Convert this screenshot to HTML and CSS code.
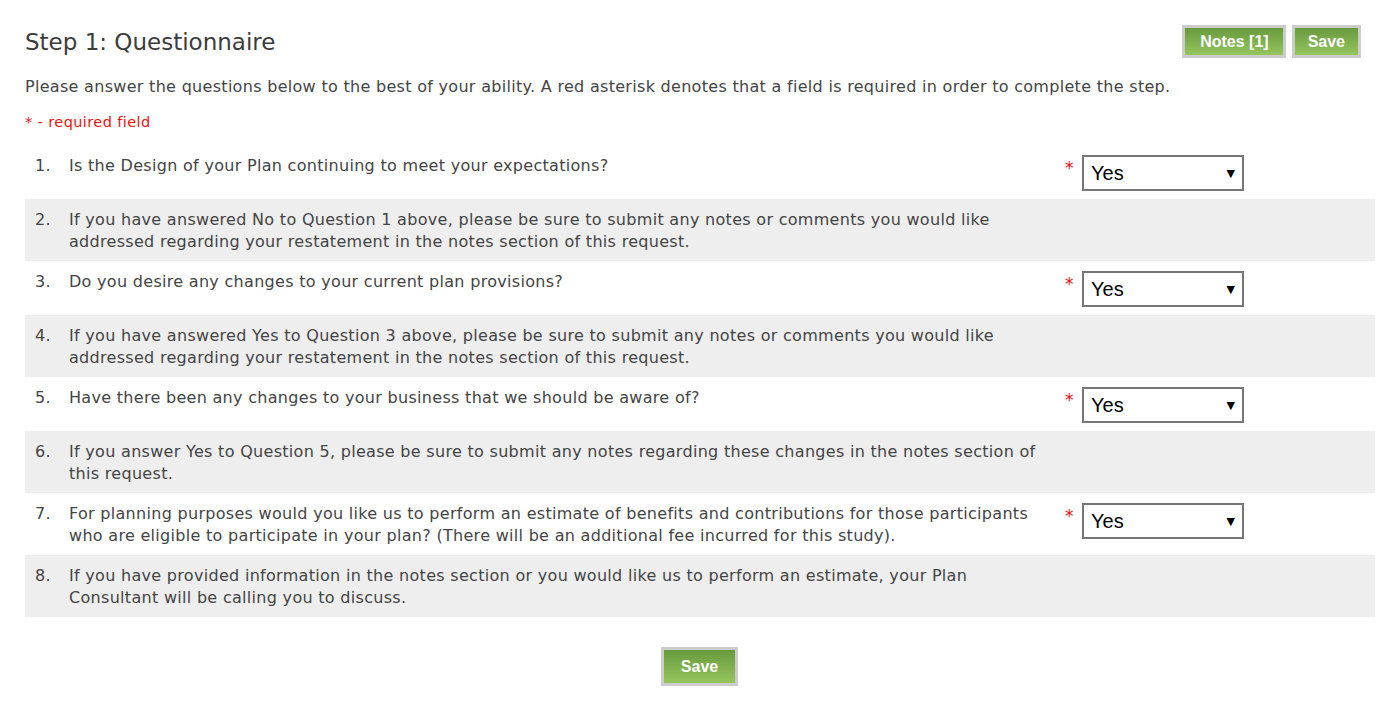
FILE: index.html
```html
<!DOCTYPE html>
<html>
<head>
<meta charset="utf-8">
<link rel="stylesheet" href="styles.css">
</head>
<body>
<div class="page">
  <div class="header">
    <h1 class="title">Step 1: Questionnaire</h1>
    <div class="actions">
      <button class="btn btn-notes">Notes [1]</button>
      <button class="btn">Save</button>
    </div>
  </div>
  <p class="intro">Please answer the questions below to the best of your ability. A red asterisk denotes that a field is required in order to complete the step.</p>
  <p class="req">* - required field</p>
  <div class="questions">
    <div class="row">
      <div class="num">1.</div>
      <div class="text">Is the Design of your Plan continuing to meet your expectations?</div>
      <div class="ans"><span class="star">*</span><div class="select"><span>Yes</span><span class="arrow">&#9660;</span></div></div>
    </div>
    <div class="row alt">
      <div class="num">2.</div>
      <div class="text">If you have answered No to Question 1 above, please be sure to submit any notes or comments you would like addressed regarding your restatement in the notes section of this request.</div>
      <div class="ans"></div>
    </div>
    <div class="row">
      <div class="num">3.</div>
      <div class="text">Do you desire any changes to your current plan provisions?</div>
      <div class="ans"><span class="star">*</span><div class="select"><span>Yes</span><span class="arrow">&#9660;</span></div></div>
    </div>
    <div class="row alt">
      <div class="num">4.</div>
      <div class="text">If you have answered Yes to Question 3 above, please be sure to submit any notes or comments you would like addressed regarding your restatement in the notes section of this request.</div>
      <div class="ans"></div>
    </div>
    <div class="row">
      <div class="num">5.</div>
      <div class="text">Have there been any changes to your business that we should be aware of?</div>
      <div class="ans"><span class="star">*</span><div class="select"><span>Yes</span><span class="arrow">&#9660;</span></div></div>
    </div>
    <div class="row alt">
      <div class="num">6.</div>
      <div class="text">If you answer Yes to Question 5, please be sure to submit any notes regarding these changes in the notes section of this request.</div>
      <div class="ans"></div>
    </div>
    <div class="row">
      <div class="num">7.</div>
      <div class="text">For planning purposes would you like us to perform an estimate of benefits and contributions for those participants who are eligible to participate in your plan? (There will be an additional fee incurred for this study).</div>
      <div class="ans"><span class="star">*</span><div class="select"><span>Yes</span><span class="arrow">&#9660;</span></div></div>
    </div>
    <div class="row alt">
      <div class="num">8.</div>
      <div class="text">If you have provided information in the notes section or you would like us to perform an estimate, your Plan Consultant will be calling you to discuss.</div>
      <div class="ans"></div>
    </div>
  </div>
  <div class="footer">
    <button class="btn btn-lg">Save</button>
  </div>
</div>
</body>
</html>
```
FILE: styles.css
```css
html, body {
  margin: 0;
  padding: 0;
  background: #ffffff;
}
body {
  font-family: "DejaVu Sans", Verdana, sans-serif;
  color: #444444;
  font-size: 16px;
  letter-spacing: 0.3px;
}
.page {
  padding: 25px 25px 0 25px;
}
.header {
  display: flex;
  justify-content: space-between;
  align-items: flex-start;
  padding-right: 14px;
}
.title {
  margin: 4px 0 0 0;
  font-size: 23px;
  font-weight: normal;
  color: #3c3c3c;
  line-height: 26px;
  letter-spacing: 0;
}
.actions {
  display: flex;
  gap: 6px;
}
.btn {
  font-family: "Liberation Sans", Arial, sans-serif;
  font-weight: bold;
  font-size: 16px;
  letter-spacing: 0;
  color: #ffffff;
  background: linear-gradient(to bottom, #679a3c, #96c55e);
  border: 3px solid #cccccc;
  height: 33px;
  padding: 0 13px;
  cursor: pointer;
}
.btn-notes {
  padding: 0 14px 0 15px;
}
.btn-lg {
  height: 39px;
  padding: 0 17px;
}
.intro {
  margin: 18px 0 0 0;
  line-height: 22px;
}
.req {
  margin: 15px 0 0 0;
  color: #ee1111;
  font-size: 14.5px;
  letter-spacing: 0.4px;
  line-height: 18px;
}
.questions {
  margin-top: 14px;
}
.row {
  display: grid;
  grid-template-columns: 44px 976px 1fr;
  padding: 10px 0 8px 0;
  min-height: 36px;
  box-sizing: content-box;
}
.row.alt {
  background: #eeeeee;
}
.num {
  padding-left: 10px;
  line-height: 22px;
}
.text {
  line-height: 22px;
}
.ans {
  display: flex;
  align-items: flex-start;
  padding-left: 20px;
}
.star {
  color: #ee1111;
  font-size: 17px;
  line-height: 18px;
  width: 17px;
  margin-top: 4px;
  letter-spacing: 0;
}
.select {
  height: 32px;
  border: 2px solid #767676;
  display: flex;
  align-items: center;
  justify-content: space-between;
  padding: 0 7px 0 7px;
  box-sizing: content-box;
  font-family: "Liberation Sans", Arial, sans-serif;
  font-size: 20px;
  letter-spacing: 0;
  color: #000000;
  width: 144px;
}
.arrow {
  font-family: "DejaVu Sans", sans-serif;
  font-size: 11px;
  margin-top: 1px;
}
.footer {
  display: flex;
  justify-content: center;
  margin-top: 30px;
  padding-right: 1px;
}
```
